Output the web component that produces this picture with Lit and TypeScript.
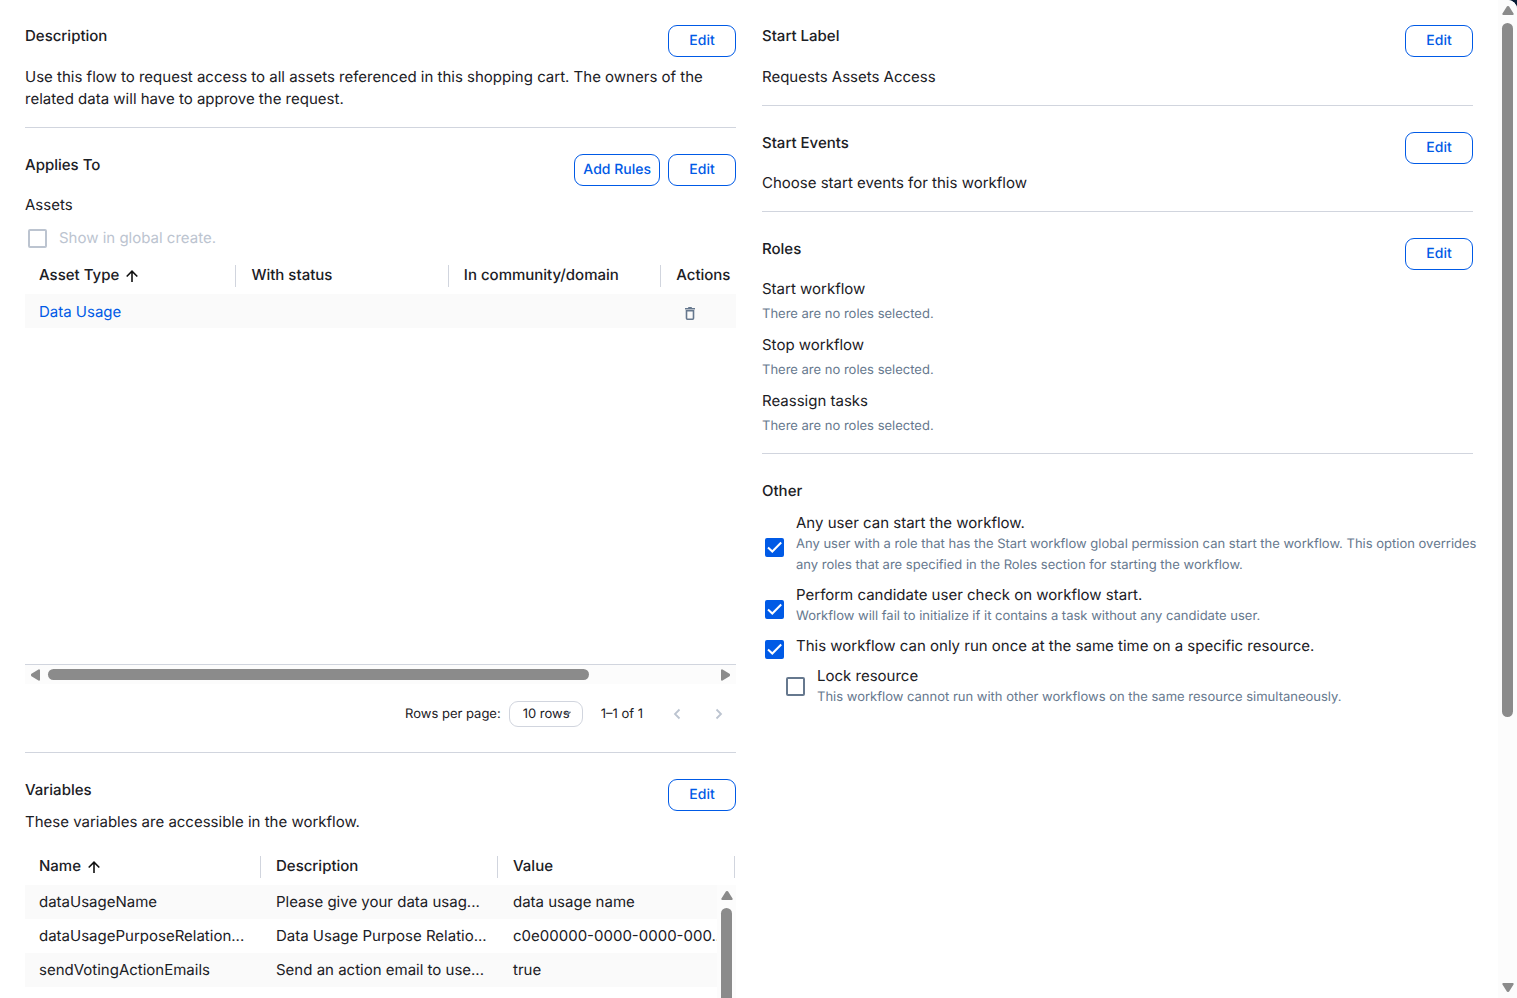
import { LitElement, html, css, svg, nothing } from "lit";
import { customElement, property } from "lit/decorators.js";

const base = css`
  *,
  *::before,
  *::after {
    box-sizing: border-box;
  }
  h2,
  h3,
  p {
    margin: 0;
    font-size: 15px;
    line-height: 22px;
    font-weight: 400;
  }
  button,
  select {
    text-rendering: inherit;
  }
`;

/** Decorative scrollbar: arrow, track with thumb, arrow. */
@customElement("scroll-rail")
export class ScrollRail extends LitElement {
  @property({ type: Boolean, reflect: true }) horizontal = false;
  /** Share of the track taken by the thumb, in percent. */
  @property({ type: Number }) thumb = 50;

  static styles = [
    base,
    css`
      :host {
        display: flex;
        flex-direction: column;
        align-items: center;
        width: 19px;
        padding: 5px 0;
        gap: 7px;
        background: #fcfcfc;
      }
      :host([horizontal]) {
        flex-direction: row;
        width: auto;
        height: 19px;
        padding: 0 5px;
      }
      svg {
        display: block;
        flex: none;
        width: 12px;
        height: 11px;
        fill: #8b8b8b;
        stroke: #8b8b8b;
        stroke-width: 2;
        stroke-linejoin: round;
      }
      :host([horizontal]) svg {
        width: 11px;
        height: 12px;
      }
      .track {
        display: flex;
        flex-direction: column;
        flex: 1;
        min-width: 0;
        min-height: 0;
      }
      :host([horizontal]) .track {
        flex-direction: row;
      }
      .thumb {
        width: 11px;
        border-radius: 6px;
        background: #8b8b8b;
      }
      :host([horizontal]) .thumb {
        width: auto;
        height: 11px;
      }
    `,
  ];

  render() {
    const size = `flex-basis:${this.thumb}%`;
    return this.horizontal
      ? html`
          <svg viewBox="0 0 11 12"><path d="M9 1.300V10.700L2 6.300V5.700Z" /></svg>
          <div class="track"><div class="thumb" style=${size}></div></div>
          <svg viewBox="0 0 11 12"><path d="M2 1.300V10.700L9 6.300V5.700Z" /></svg>
        `
      : html`
          <svg viewBox="0 0 12 11"><path d="M1.300 9H10.700L6.300 2H5.700Z" /></svg>
          <div class="track"><div class="thumb" style=${size}></div></div>
          <svg viewBox="0 0 12 11"><path d="M1.300 2H10.700L6.300 9H5.700Z" /></svg>
        `;
  }
}

/** Titled block with action buttons on the right. */
@customElement("config-section")
export class ConfigSection extends LitElement {
  @property() heading = "";
  @property({ type: Array }) actions: string[] = [];

  static styles = [
    base,
    css`
      :host {
        display: block;
        padding: 26px 0 17px;
        border-bottom: 1px solid #d1d5de;
      }
      :host(:first-child) {
        padding-top: 0;
      }
      :host(:last-child) {
        border-bottom: 0;
        padding-bottom: 0;
      }
      header {
        display: flex;
        justify-content: space-between;
        align-items: flex-start;
        min-height: 32px;
      }
      h2 {
        font-weight: 500;
      }
      .actions {
        display: flex;
        gap: 8px;
      }
      button {
        height: 32px;
        min-width: 68px;
        padding: 0 8px;
        border: 1px solid #005ae6;
        border-radius: 9px;
        background: #fff;
        color: #005ae6;
        font: 500 14px/20px Inter, sans-serif;
      }
    `,
  ];

  render() {
    return html`
      <header>
        <h2>${this.heading}</h2>
        ${this.actions.length
          ? html`<div class="actions">
              ${this.actions.map((a) => html`<button type="button">${a}</button>`)}
            </div>`
          : nothing}
      </header>
      <slot></slot>
    `;
  }
}

@customElement("option-check")
export class OptionCheck extends LitElement {
  @property() label = "";
  @property() hint = "";
  @property({ type: Boolean, reflect: true }) checked = false;
  @property({ type: Boolean, reflect: true }) disabled = false;

  static styles = [
    base,
    css`
      :host {
        display: block;
      }
      label {
        display: flex;
        align-items: center;
        gap: 12px;
        padding-left: 3px;
      }
      .box {
        display: grid;
        flex: none;
      }
      :host([checked]) .box {
        margin: 4px 0 -3px;
      }
      .box > * {
        grid-area: 1 / 1;
      }
      input {
        appearance: none;
        width: 19px;
        height: 19px;
        margin: 0;
        border: 2px solid #66788e;
        border-radius: 2px;
        background: #fff;
      }
      input:checked {
        border-color: #005ae6;
        background: #005ae6;
      }
      input:disabled {
        border-color: #bcc4d0;
      }
      svg {
        width: 19px;
        height: 19px;
        fill: none;
        stroke: #fff;
        stroke-width: 2;
        pointer-events: none;
      }
      .text {
        display: flex;
        flex-direction: column;
        font-size: 15px;
        line-height: 22px;
      }
      .hint {
        color: #66788e;
        font-size: 13px;
        line-height: 21px;
      }
      :host([disabled]) .text {
        color: #bcc4d0;
      }
    `,
  ];

  render() {
    return html`
      <label>
        <span class="box">
          <input type="checkbox" .checked=${this.checked} ?disabled=${this.disabled} />
          ${this.checked
            ? html`<svg viewBox="0 0 19 19"><path d="M3 9.500L7.300 13.500L16.200 4.500" /></svg>`
            : nothing}
        </span>
        <span class="text">
          <span>${this.label}</span>
          ${this.hint ? html`<span class="hint">${this.hint}</span>` : nothing}
        </span>
      </label>
    `;
  }
}

const tableStyles = css`
  table {
    width: 100%;
    border-collapse: collapse;
    table-layout: fixed;
    font-size: 15px;
    line-height: 22px;
  }
  th,
  td {
    position: relative;
    padding: 0 8px 0 14px;
    text-align: left;
    white-space: nowrap;
    overflow: hidden;
    text-overflow: ellipsis;
  }
  th {
    height: 38px;
    font-weight: 500;
  }
  th::after {
    content: "";
    position: absolute;
    top: 9px;
    right: 1px;
    width: 1px;
    height: 22px;
    background: #d1d5de;
  }
  td {
    height: 34px;
  }
  tbody tr:nth-child(odd) {
    background: #fafafa;
  }
  .sort {
    width: 12px;
    height: 12px;
    margin-left: 3px;
    vertical-align: -2px;
    fill: none;
    stroke: #111;
    stroke-width: 1.600;
  }
`;

const sortIcon = html`<svg class="sort" viewBox="0 0 12 12" aria-hidden="true">
  ${svg`<path d="M6 12V1.300M0.700 6.500L6 1.200L11.300 6.500" />`}
</svg>`;

@customElement("asset-table")
export class AssetTable extends LitElement {
  static styles = [
    base,
    tableStyles,
    css`
      :host {
        display: block;
      }
      .viewport {
        min-height: 408px;
        overflow: hidden;
      }
      .viewport td {
        padding-top: 2px;
      }
      .wide {
        width: 119.500%;
      }
      .rail {
        border-top: 1px solid #d1d5de;
      }
      a {
        color: #005ae6;
        text-decoration: none;
      }
      .icon {
        display: flex;
        align-items: center;
        justify-content: center;
        padding: 0;
        border: 0;
        background: none;
        color: #66788e;
      }
      .delete {
        width: 28px;
        height: 28px;
      }
      .delete svg {
        width: 10px;
        height: 13px;
        margin-top: 2px;
      }
      svg {
        fill: none;
        stroke: currentColor;
      }
      .pager {
        display: flex;
        align-items: center;
        justify-content: flex-end;
        height: 51px;
        padding: 8px 3px 0 0;
        font-size: 13px;
        line-height: 20px;
      }
      .size {
        display: grid;
        align-items: center;
        margin: 0 18px 0 8px;
      }
      .size > * {
        grid-area: 1 / 1;
      }
      select {
        appearance: none;
        width: 74px;
        height: 26px;
        padding: 0 0 0 13px;
        border: 1px solid #d1d5de;
        border-radius: 9px;
        background: #fff;
        color: inherit;
        font: 400 13px/20px Inter, sans-serif;
      }
      .size svg {
        justify-self: end;
        width: 7px;
        height: 5px;
        margin-right: 12px;
        color: #66788e;
        pointer-events: none;
      }
      .pages {
        display: flex;
        gap: 14px;
        margin-left: 20px;
      }
      .pages .icon {
        width: 28px;
        height: 28px;
        color: #bcc4d0;
      }
      .pages svg {
        width: 8px;
        height: 12px;
        stroke-width: 1.800;
      }
    `,
  ];

  render() {
    return html`
      <div class="viewport">
        <table class="wide">
          <thead>
            <tr>
              <th>Asset Type ${sortIcon}</th>
              <th>With status</th>
              <th>In community/domain</th>
              <th>Actions</th>
            </tr>
          </thead>
          <tbody>
            <tr>
              <td><a href="#data-usage">Data Usage</a></td>
              <td></td>
              <td></td>
              <td>
                <button class="icon delete" type="button" aria-label="Delete">
                  <svg viewBox="0 0 10 13">
                    <path
                      d="M0 1.800H10M3.200 0.800H6.800M1.500 3.700H8.500V11.300Q8.500 12.200 7.600 12.200H2.400Q1.500 12.200 1.500 11.300Z"
                      stroke-width="1.600"
                    />
                  </svg>
                </button>
              </td>
            </tr>
          </tbody>
        </table>
      </div>
      <div class="rail"><scroll-rail horizontal thumb="81.300"></scroll-rail></div>
      <div class="pager">
        <label for="rows">Rows per page:</label>
        <span class="size">
          <select id="rows">
            <option>10 rows</option>
          </select>
          <svg viewBox="0 0 7 5"><path d="M0.500 0.800L3.500 3.800L6.500 0.800" stroke-width="1.400" /></svg>
        </span>
        <span>1–1 of 1</span>
        <div class="pages">
          <button class="icon" type="button" aria-label="Previous page" disabled>
            <svg viewBox="0 0 8 12"><path d="M6.500 1.500L2 6L6.500 10.500" /></svg>
          </button>
          <button class="icon" type="button" aria-label="Next page" disabled>
            <svg viewBox="0 0 8 12"><path d="M1.500 1.500L6 6L1.500 10.500" /></svg>
          </button>
        </div>
      </div>
    `;
  }
}

@customElement("variable-table")
export class VariableTable extends LitElement {
  static styles = [
    base,
    tableStyles,
    css`
      :host {
        display: block;
        position: relative;
        height: 400px;
        overflow: hidden;
      }
      .rail {
        position: absolute;
        top: 38px;
        right: 0;
        bottom: 0;
        display: flex;
      }
    `,
  ];

  private rows = [
    ["dataUsageName", "Please give your data usag...", "data usage name"],
    [
      "dataUsagePurposeRelation...",
      "Data Usage Purpose Relatio...",
      "c0e00000-0000-0000-000..",
    ],
    ["sendVotingActionEmails", "Send an action email to use...", "true"],
  ];

  render() {
    return html`
      <table>
        <thead>
          <tr>
            <th>Name ${sortIcon}</th>
            <th>Description</th>
            <th>Value</th>
          </tr>
        </thead>
        <tbody>
          ${this.rows.map(
            (r) => html`<tr>
              ${r.map((c) => html`<td>${c}</td>`)}
            </tr>`
          )}
        </tbody>
      </table>
      <div class="rail"><scroll-rail thumb="60"></scroll-rail></div>
    `;
  }
}

@customElement("app-root")
export class AppRoot extends LitElement {
  static styles = [
    base,
    css`
      :host {
        display: block;
        height: 100vh;
        background: #061a33;
        color: #1b2025;
        font-family: Inter, sans-serif;
        font-size: 15px;
        line-height: 22px;
        text-rendering: geometricPrecision;
      }
      .panel {
        display: flex;
        height: 100%;
        overflow: hidden;
        border-top-right-radius: 9px;
        background: #fff;
      }
      .columns {
        display: grid;
        grid-template-columns: minmax(0, 1fr) minmax(0, 1fr);
        align-items: start;
        gap: 26px;
        flex: 1;
        min-width: 0;
        overflow: hidden;
        padding: 25px 25px 0;
      }
      .body {
        margin-top: 8px;
      }
      .value {
        margin-top: 9px;
      }
      .global {
        display: block;
        padding: 11px 0 7px;
      }
      .roles,
      .options {
        display: grid;
      }
      .roles {
        gap: 10px;
      }
      .options {
        gap: 8px;
        margin-right: -16px;
      }
      .note {
        padding-top: 4px;
        color: #66788e;
        font-size: 13px;
        line-height: 20px;
      }
      .nested {
        margin-left: 21px;
      }
      .variables {
        margin-top: 14px;
      }
    `,
  ];

  render() {
    return html`
      <div class="panel">
        <main class="columns">
          <div>
            <config-section heading="Description" .actions=${["Edit"]}>
              <p class="value">
                Use this flow to request access to all assets referenced in this shopping cart. The
                owners of the related data will have to approve the request.
              </p>
            </config-section>
            <config-section heading="Applies To" .actions=${["Add Rules", "Edit"]}>
              <h3 class="body">Assets</h3>
              <option-check class="global" label="Show in global create." disabled></option-check>
              <asset-table></asset-table>
            </config-section>
            <config-section heading="Variables" .actions=${["Edit"]}>
              <p>These variables are accessible in the workflow.</p>
              <variable-table class="variables"></variable-table>
            </config-section>
          </div>
          <div>
            <config-section heading="Start Label" .actions=${["Edit"]}>
              <p class="value">Requests Assets Access</p>
            </config-section>
            <config-section heading="Start Events" .actions=${["Edit"]}>
              <p class="body">Choose start events for this workflow</p>
            </config-section>
            <config-section heading="Roles" .actions=${["Edit"]}>
              <div class="roles body">
                ${["Start workflow", "Stop workflow", "Reassign tasks"].map(
                  (role) => html`<div>
                    <h3>${role}</h3>
                    <p class="note">There are no roles selected.</p>
                  </div>`
                )}
              </div>
            </config-section>
            <config-section heading="Other">
              <div class="options">
                <option-check
                  checked
                  label="Any user can start the workflow."
                  hint="Any user with a role that has the Start workflow global permission can start the workflow. This option overrides any roles that are specified in the Roles section for starting the workflow."
                ></option-check>
                <option-check
                  checked
                  label="Perform candidate user check on workflow start."
                  hint="Workflow will fail to initialize if it contains a task without any candidate user."
                ></option-check>
                <option-check
                  checked
                  label="This workflow can only run once at the same time on a specific resource."
                ></option-check>
                <option-check
                  class="nested"
                  label="Lock resource"
                  hint="This workflow cannot run with other workflows on the same resource simultaneously."
                ></option-check>
              </div>
            </config-section>
          </div>
        </main>
        <scroll-rail thumb="72.900"></scroll-rail>
      </div>
    `;
  }
}
